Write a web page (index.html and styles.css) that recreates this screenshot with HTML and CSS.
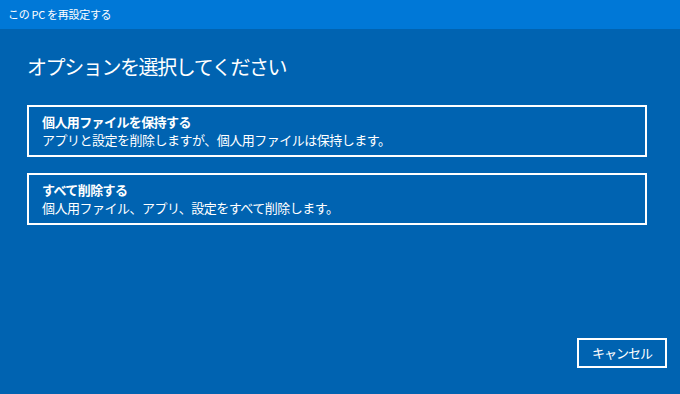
FILE: index.html
```html
<!DOCTYPE html>
<html lang="ja">
<head>
<meta charset="utf-8">
<link rel="stylesheet" href="styles.css">
</head>
<body>
<div class="window">
  <div class="titlebar">この PC を再設定する</div>
  <div class="content">
    <h1 class="heading">オプションを選択してください</h1>
    <div class="options">
      <div class="option">
        <div class="option-title">個人用ファイルを保持する</div>
        <div class="option-desc">アプリと設定を削除しますが、個人用ファイルは保持します。</div>
      </div>
      <div class="option">
        <div class="option-title">すべて削除する</div>
        <div class="option-desc">個人用ファイル、アプリ、設定をすべて削除します。</div>
      </div>
    </div>
    <div class="footer">
      <div class="cancel">キャンセル</div>
    </div>
  </div>
</div>
</body>
</html>
```

FILE: styles.css
```css
html, body {
  margin: 0;
  padding: 0;
}
body {
  width: 680px;
  height: 394px;
  overflow: hidden;
  font-family: "Noto Sans CJK JP", "Noto Sans", sans-serif;
  color: #ffffff;
  background: #0063b1;
}
.window {
  display: flex;
  flex-direction: column;
  height: 394px;
}
.titlebar {
  height: 29px;
  background: #0078d7;
  font-size: 11px;
  line-height: 29px;
  padding-left: 8px;
  letter-spacing: -0.3px;
}
.content {
  flex: 1;
  display: flex;
  flex-direction: column;
  padding: 0 33px 0 27px;
}
.heading {
  margin: 23px 0 0 0;
  font-size: 20px;
  font-weight: 400;
  line-height: 30px;
  height: 30px;
  letter-spacing: -1.4px;
}
.options {
  display: flex;
  flex-direction: column;
  gap: 16px;
  margin-top: 23px;
}
.option {
  border: 2px solid #ffffff;
  height: 48px;
  padding: 0 0 0 13px;
  display: flex;
  flex-direction: column;
  justify-content: center;
}
.option-title {
  font-size: 13px;
  font-weight: 700;
  line-height: 18px;
  letter-spacing: -0.6px;
}
.option-desc {
  font-size: 13px;
  line-height: 18px;
  letter-spacing: -0.5px;
}
.footer {
  margin-top: auto;
  display: flex;
  justify-content: flex-end;
  padding-bottom: 26px;
  margin-right: -20px;
}
.cancel {
  width: 86px;
  height: 26px;
  border: 2px solid #ffffff;
  font-size: 13px;
  line-height: 26px;
  text-align: center;
  letter-spacing: -1px;
}
```
